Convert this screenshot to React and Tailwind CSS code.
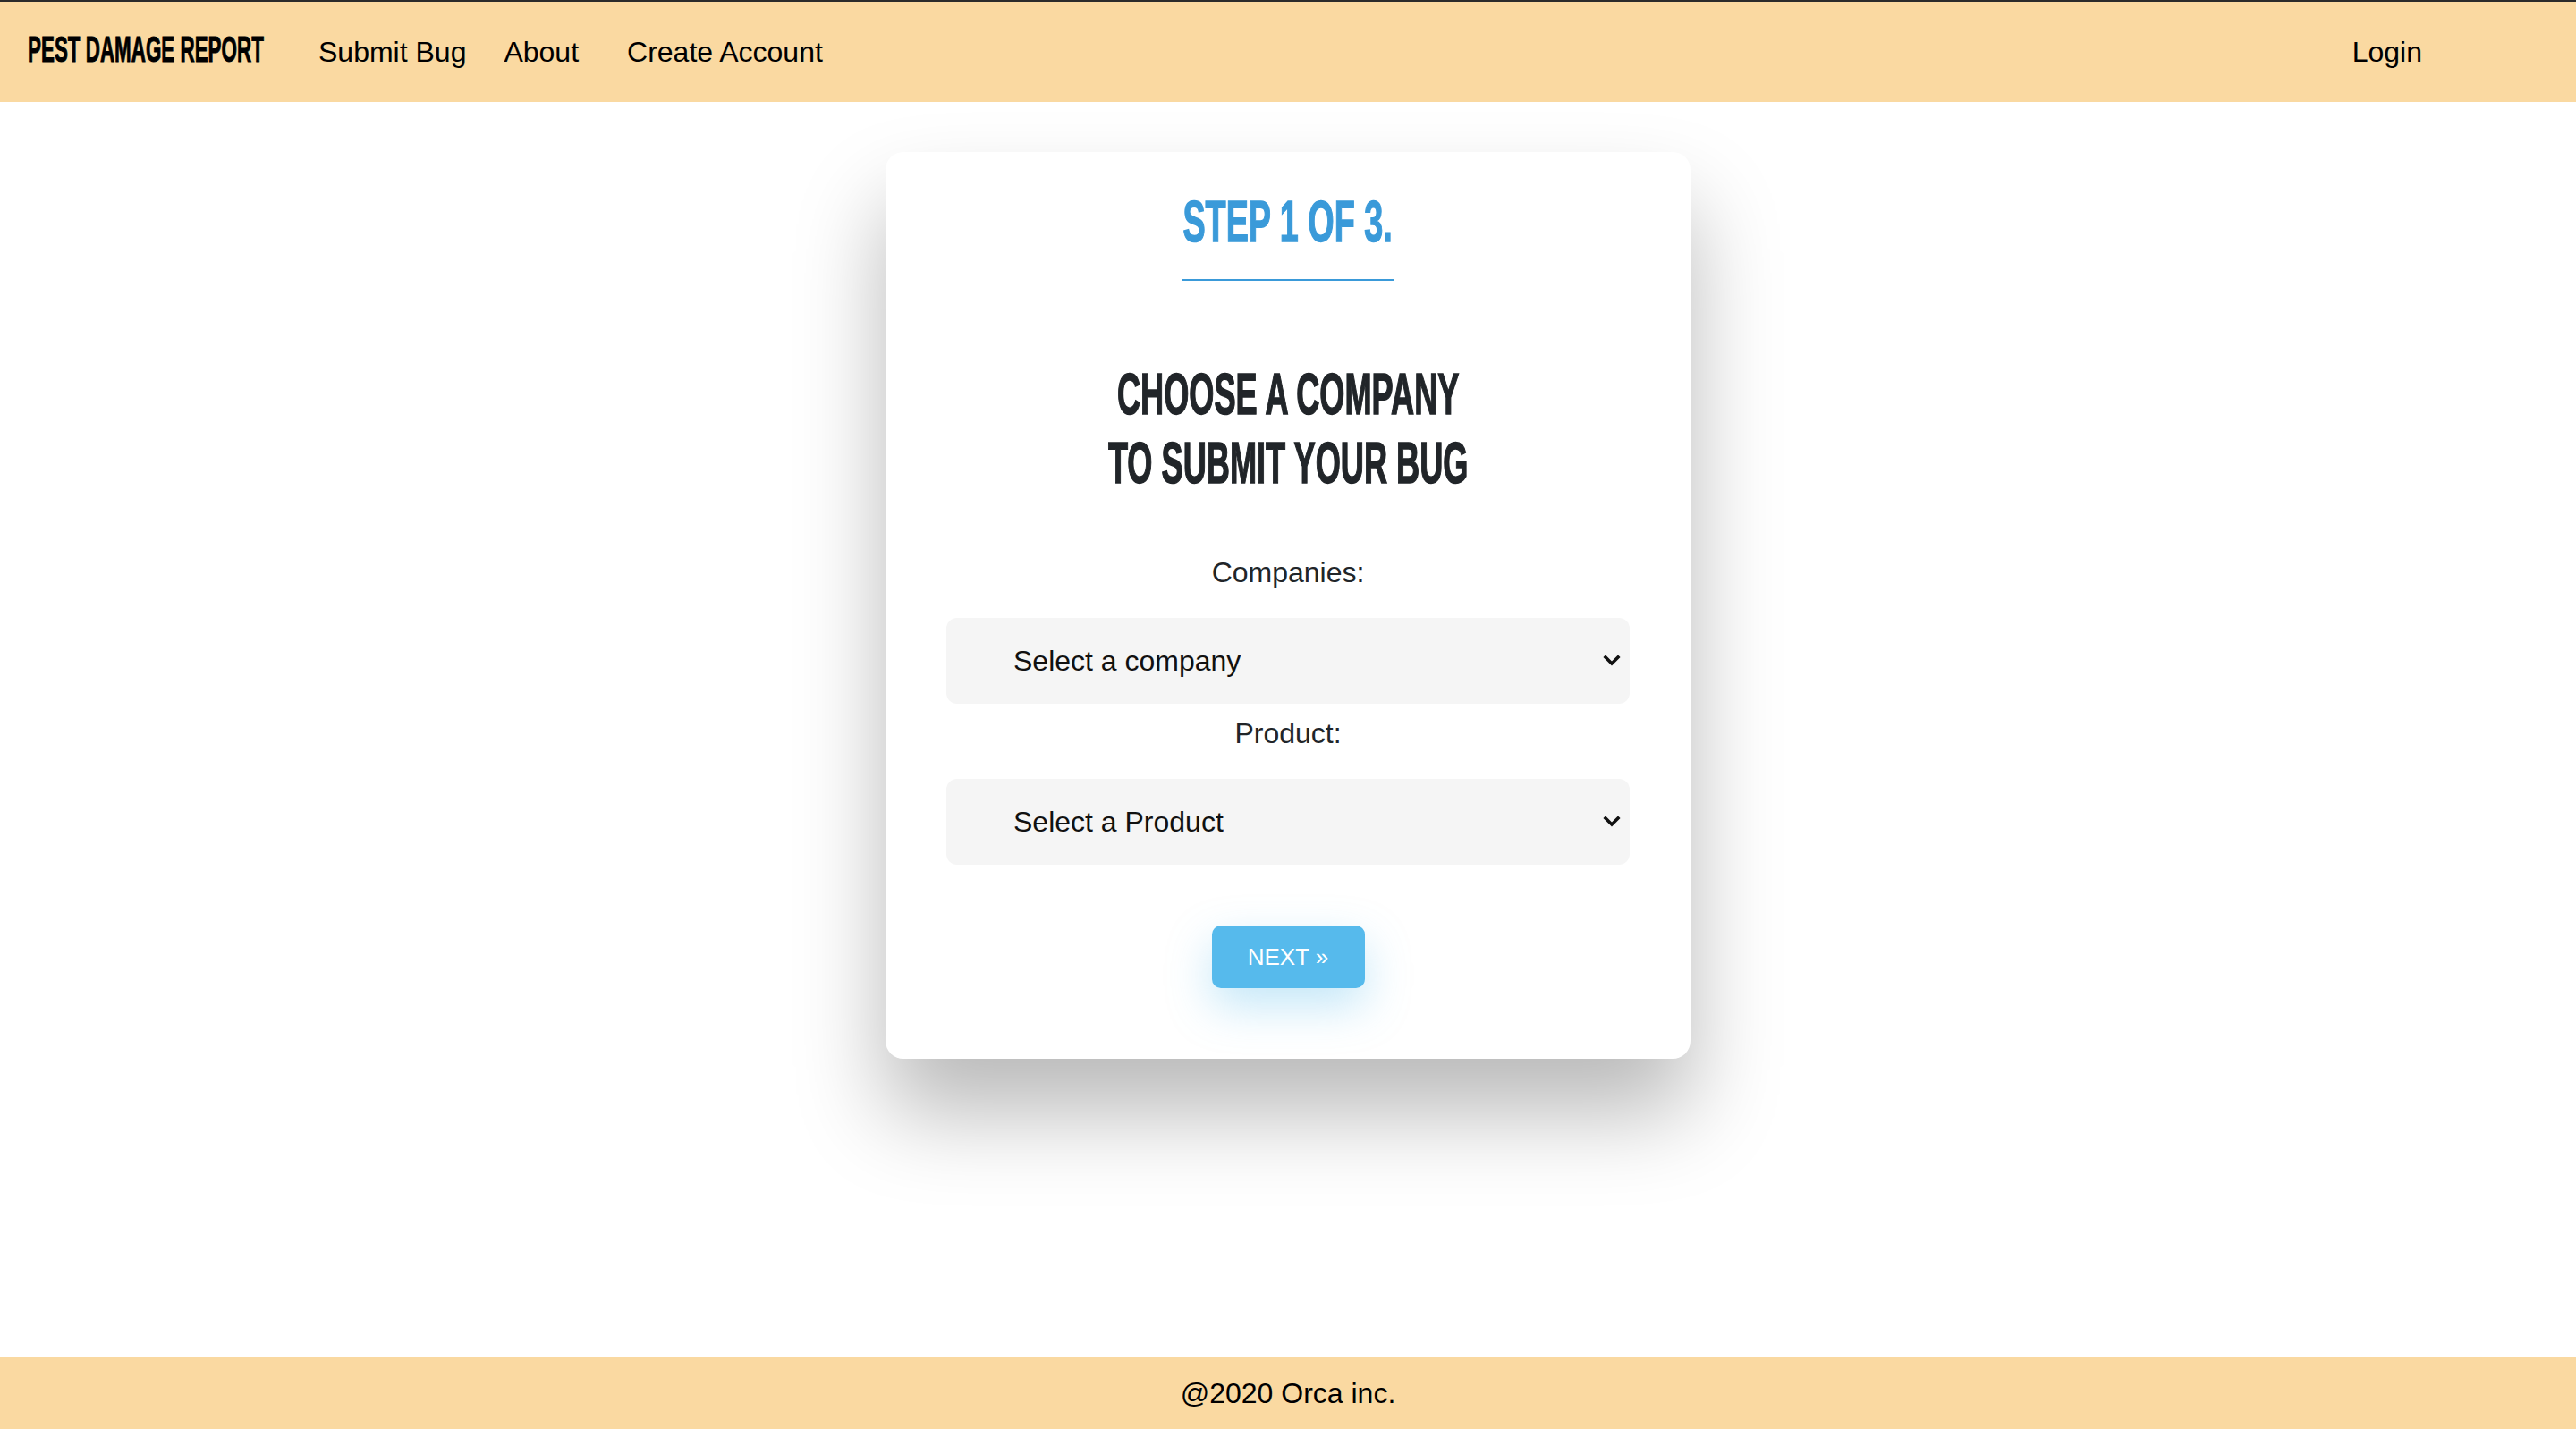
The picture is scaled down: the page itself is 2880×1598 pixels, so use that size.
import React, { useState } from 'react';

const condensed = { fontFamily: '"Liberation Sans", Arial, sans-serif' };

function Chevron() {
  return (
    <svg width="20" height="12" viewBox="0 0 20 12" className="pointer-events-none absolute right-[10px] top-1/2 -translate-y-1/2">
      <polyline points="3,2 10,9 17,2" fill="none" stroke="#111" strokeWidth="3.6" strokeLinecap="square" />
    </svg>
  );
}

function Navbar() {
  return (
    <nav className="flex h-[114px] items-center border-t-2 border-[#2b2b2b] bg-[#fad9a1] text-[32px] text-black">
      <div className="ml-[31px] w-[265px] whitespace-nowrap">
        <span style={condensed} className="inline-block origin-left scale-x-[0.56] text-[40px] font-bold uppercase leading-none [-webkit-text-stroke:1px_currentColor]">
          Pest Damage Report
        </span>
      </div>
      <a href="#" className="ml-[60px]">Submit Bug</a>
      <a href="#" className="ml-[42px]">About</a>
      <a href="#" className="ml-[54px]">Create Account</a>
      <a href="#" className="ml-auto mr-[172px]">Login</a>
    </nav>
  );
}

function App() {
  const [form, setForm] = useState({ company: '', product: '' });

  return (
    <div className="flex min-h-screen flex-col bg-white" style={{ fontFamily: '"Liberation Sans", Arial, sans-serif' }}>
      <Navbar />
      <main className="flex flex-1 justify-center">
        <div className="mt-[56px] mb-[100px] flex h-fit w-[900px] flex-col items-center rounded-[20px] bg-white px-[68px] pt-[40px] pb-[79px] shadow-[0_60px_100px_rgba(0,0,0,0.28)]">
          <h2 style={condensed} className="scale-x-[0.59] text-[64px] font-bold uppercase leading-[1.2] text-[#3a9ad9] [-webkit-text-stroke:1.5px_currentColor]">
            Step 1 of 3.
          </h2>
          <div className="mt-[25px] h-[2px] w-[236px] bg-[#3a9ad9]" />
          <h1 style={condensed} className="mt-[89px] scale-x-[0.565] text-center text-[64px] font-bold uppercase leading-[1.2] text-[#212529] [-webkit-text-stroke:1.5px_currentColor]">
            Choose a company
            <br />
            to submit your bug
          </h1>

          <label className="mt-[60px] text-[32px] leading-[48px] text-[#212529]">Companies:</label>
          <div className="relative mt-[27px] w-[764px]">
            <select
              value={form.company}
              onChange={(e) => setForm({ ...form, company: e.target.value })}
              className="h-[96px] w-full appearance-none rounded-[12px] bg-[#f5f5f5] pl-[75px] text-[32px] text-[#111]"
            >
              <option value="">Select a company</option>
            </select>
            <Chevron />
          </div>

          <label className="mt-[9px] text-[32px] leading-[48px] text-[#212529]">Product:</label>
          <div className="relative mt-[27px] w-[764px]">
            <select
              value={form.product}
              onChange={(e) => setForm({ ...form, product: e.target.value })}
              className="h-[96px] w-full appearance-none rounded-[12px] bg-[#f5f5f5] pl-[75px] text-[32px] text-[#111]"
            >
              <option value="">Select a Product</option>
            </select>
            <Chevron />
          </div>

          <button className="mt-[68px] h-[70px] w-[171px] rounded-[10px] bg-[#56baec] text-[26px] text-white shadow-[0_20px_50px_rgba(86,186,236,0.35)]">
            NEXT »
          </button>
        </div>
      </main>
      <footer className="flex h-[81px] items-center justify-center bg-[#fad9a1] text-[32px] text-black">
        @2020 Orca inc.
      </footer>
    </div>
  );
}

export default App;
